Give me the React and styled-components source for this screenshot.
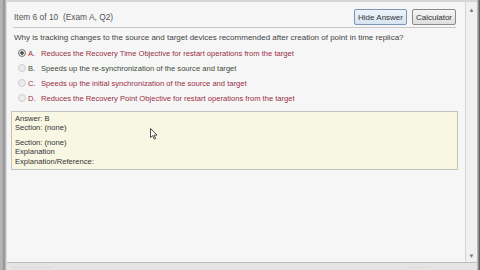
import React from "react";
import styled, { createGlobalStyle } from "styled-components";

const GlobalStyle = createGlobalStyle`
  html, body {
    margin: 0;
    padding: 0;
    width: 480px;
    height: 270px;
    overflow: hidden;
    background: #f6f6f6;
  }
`;

const Frame = styled.div`
  display: flex;
  width: 480px;
  height: 270px;
  font-family: "Liberation Sans", Arial, sans-serif;
  color: #3a3a3a;
`;

const LeftEdge = styled.div`
  width: 7px;
  background: linear-gradient(
    to right,
    #c9c9c9 0px, #9a9a9a 1px, #d8d8d8 2px, #7f7f7f 3px,
    #b0b0b0 4px, #8c8c8c 5px, #dedede 6px
  );
`;

const RightEdge = styled.div`
  width: 3px;
  background: linear-gradient(to right, #cfcfcf, #4a4a4a);
`;

const Body = styled.div`
  flex: 1;
  display: flex;
  flex-direction: column;
`;

const Upper = styled.div`
  flex: 1;
  display: flex;
  border-top: 2px solid #d6d6d6;
`;

const Content = styled.div`
  flex: 1;
  position: relative;
  background: #f6f6f6;
  padding: 6px 9px 0 6px;
`;

const Header = styled.div`
  display: flex;
  align-items: center;
  justify-content: space-between;
  height: 18px;
  padding-bottom: 1px;
  border-bottom: 1px solid #c8c8c8;
`;

const ItemLabel = styled.span`
  font-size: 8.4px;
  color: #555;
  padding-left: 1px;
`;

const Buttons = styled.div`
  display: flex;
  gap: 5px;
`;

const Button = styled.button`
  height: 16px;
  padding: 0 3px;
  font-family: inherit;
  font-size: 8px;
  color: #333;
  border: 1px solid ${(p) => (p.$active ? "#7a96b4" : "#8a8a8a")};
  border-radius: 2px;
  background: ${(p) =>
    p.$active
      ? "linear-gradient(#eef4fb, #d7e4f1)"
      : "linear-gradient(#f6f6f6, #dedede)"};
`;

const Question = styled.p`
  margin: 5px 0 0 1px;
  font-size: 8px;
  color: #444;
`;

const Options = styled.div`
  display: flex;
  flex-direction: column;
  gap: 3px;
  margin-top: 5px;
  padding-left: 5px;
`;

const Option = styled.div`
  display: flex;
  align-items: center;
  height: 12px;
  font-size: 7.6px;
  color: ${(p) => (p.$correct ? "#3f4a3a" : "#9a2e45")};
`;

const Radio = styled.span`
  width: 6px;
  height: 6px;
  border-radius: 50%;
  border: 1px solid ${(p) => (p.$checked ? "#777" : "#cfcfcf")};
  background: ${(p) =>
    p.$checked
      ? "radial-gradient(circle, #555 0 1.5px, #e8e8e8 2px)"
      : "#ececec"};
  margin-right: 2px;
`;

const Letter = styled.span`
  width: 13px;
`;

const AnswerBox = styled.div`
  margin: 7px -2px 0 -2px;
  padding: 2px 3px 3px;
  background: #f8f7e3;
  border: 1px solid #c4c4bc;
  font-size: 7.6px;
  line-height: 9.4px;
  color: #333;
`;

const Gap = styled.div`
  height: 5px;
`;

const Scrollbar = styled.div`
  width: 11px;
  display: flex;
  flex-direction: column;
  justify-content: space-between;
  align-items: center;
  background: #f0f0f0;
  border-left: 1px solid #d4d4d4;
  padding: 5px 0 3px;
  font-size: 6px;
  color: #777;
`;

const StatusBar = styled.div`
  height: 7px;
  display: flex;
  align-items: center;
  justify-content: space-between;
  background: #e4e4e4;
  border-top: 1px solid #bdbdbd;
  padding: 0 46px 0 6px;
  font-size: 6px;
  color: #b0b0b0;
  overflow: hidden;
`;

const Cursor = styled.svg`
  position: absolute;
  left: 143px;
  top: 126px;
`;

const options = [
  { letter: "A.", text: "Reduces the Recovery Time Objective for restart operations from the target", checked: true },
  { letter: "B.", text: "Speeds up the re-synchronization of the source and target", correct: true },
  { letter: "C.", text: "Speeds up the initial synchronization of the source and target" },
  { letter: "D.", text: "Reduces the Recovery Point Objective for restart operations from the target" },
];

export default function App() {
  return (
    <>
      <GlobalStyle />
      <Frame>
        <LeftEdge />
        <Body>
          <Upper>
            <Content>
              <Header>
                <ItemLabel>Item 6 of 10&nbsp; (Exam A, Q2)</ItemLabel>
                <Buttons>
                  <Button $active>Hide Answer</Button>
                  <Button>Calculator</Button>
                </Buttons>
              </Header>
              <Question>
                Why is tracking changes to the source and target devices recommended after creation of point in time replica?
              </Question>
              <Options>
                {options.map((o) => (
                  <Option key={o.letter} $correct={o.correct}>
                    <Radio $checked={o.checked} />
                    <Letter>{o.letter}</Letter>
                    {o.text}
                  </Option>
                ))}
              </Options>
              <AnswerBox>
                <div>Answer: B</div>
                <div>Section: (none)</div>
                <Gap />
                <div>Section: (none)</div>
                <div>Explanation</div>
                <div>Explanation/Reference:</div>
              </AnswerBox>
              <Cursor width="8" height="12" viewBox="0 0 8 12">
                <path d="M0.5 0.5 L0.5 9.5 L2.7 7.6 L4.3 11.2 L5.6 10.6 L4.1 7.1 L7 7.1 Z" fill="#fff" stroke="#222" strokeWidth="0.8" />
              </Cursor>
            </Content>
            <Scrollbar>
              <span>▲</span>
              <span>▼</span>
            </Scrollbar>
          </Upper>
          <StatusBar>
            <span>··· ········ ·······</span>
            <span>····· · · ·</span>
          </StatusBar>
        </Body>
        <RightEdge />
      </Frame>
    </>
  );
}
